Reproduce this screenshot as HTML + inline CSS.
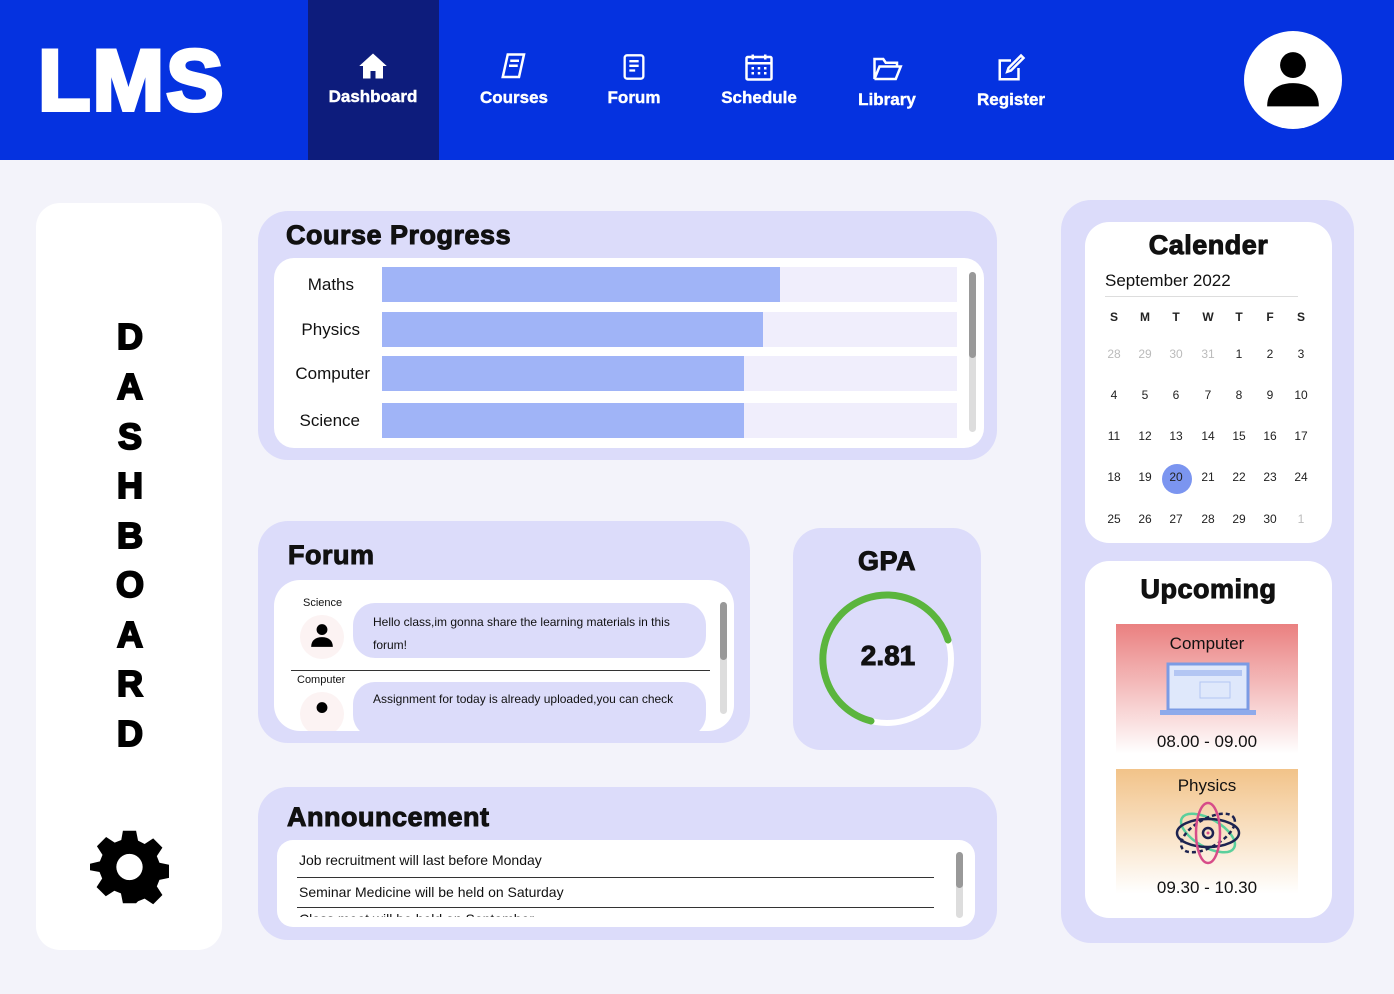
<!DOCTYPE html>
<html><head><meta charset="utf-8"><style>
*{margin:0;padding:0;box-sizing:border-box}
body{width:1394px;height:994px;background:#f3f3fa;font-family:"Liberation Sans",sans-serif;position:relative;overflow:hidden;color:#111}
.a{position:absolute}
.hd{left:0;top:0;width:1394px;height:160px;background:#0532e0}
.nav{color:#fff;font-weight:bold;font-size:17px;text-align:center;width:130px;-webkit-text-stroke:0.4px #fff}
.nav svg{display:block;margin:0 auto 6px}
.panel{background:#dcdcfa;border-radius:30px}
.white{background:#fff;border-radius:20px}
.h{font-weight:900;font-size:27px;letter-spacing:0.5px;-webkit-text-stroke:1px #111}
.lbl{font-size:17px;text-align:right;width:98px}
.track{left:382px;width:575px;height:35px;background:#f0eefc}
.fill{left:0;top:0;height:35px;background:#a0b4f7}
.cal{font-size:12px;width:30px;text-align:center;color:#222}
.g{color:#bbb}
.vl{font-weight:900;font-size:36px;left:114px;width:32px;text-align:center;-webkit-text-stroke:2px #000;color:#000}
</style></head><body>
<div class="a hd"></div>
<div class="a" style="left:38px;top:32px;color:#fff;font-weight:900;font-size:86px;letter-spacing:2px;-webkit-text-stroke:4px #fff">LMS</div>
<div class="a" style="left:308px;top:0;width:131px;height:160px;background:#0d1c7c"></div>
<div class="a nav" style="left:308px;top:51px"><svg width="30" height="30" viewBox="0 0 24 24"><path d="M12 2L1 12h3v10h6v-6h4v6h6V12h3z" fill="#fff"/></svg>Dashboard</div>
<div class="a nav" style="left:449px;top:52px"><svg width="30" height="30" viewBox="0 0 24 24" fill="none" stroke="#fff" stroke-width="2"><path d="M7 2h13l-4 18H3z"/><path d="M9 7h7M8 11h7"/></svg>Courses</div>
<div class="a nav" style="left:569px;top:52px"><svg width="28" height="30" viewBox="0 0 24 24" fill="none" stroke="#fff" stroke-width="2"><rect x="4" y="2" width="16" height="20" rx="2"/><path d="M8 7h8M8 11h8M8 15h5"/></svg>Forum</div>
<div class="a nav" style="left:694px;top:52px"><svg width="30" height="30" viewBox="0 0 24 24" fill="none" stroke="#fff" stroke-width="2"><rect x="2" y="4" width="20" height="18" rx="1"/><path d="M2 9h20M7 2v4M17 2v4M6 13h2M11 13h2M16 13h2M6 17h2M11 17h2M16 17h2"/></svg>Schedule</div>
<div class="a nav" style="left:822px;top:54px"><svg width="32" height="30" viewBox="0 0 24 24" fill="none" stroke="#fff" stroke-width="2"><path d="M2 4h7l2 3h9v3H6L2 20z M6 10h17l-4 10H2"/></svg>Library</div>
<div class="a nav" style="left:946px;top:52px"><svg width="30" height="32" viewBox="0 0 24 24" fill="none" stroke="#fff" stroke-width="2"><path d="M18 12v9H3V6h9"/><path d="M20 2l2 2-10 10-3 1 1-3z"/></svg>Register</div>
<div class="a" style="left:1244px;top:31px;width:98px;height:98px;border-radius:50%;background:#fff"></div>
<svg class="a" style="left:1262px;top:47px" width="62" height="62" viewBox="0 0 24 24"><circle cx="12" cy="7" r="5" fill="#000"/><path d="M2 23c0-6 4-9 10-9s10 3 10 9z" fill="#000"/></svg>

<div class="a white" style="left:36px;top:203px;width:186px;height:747px;border-radius:24px"></div>
<div class="a vl" style="top:316px">D</div><div class="a vl" style="top:366px">A</div><div class="a vl" style="top:416px">S</div><div class="a vl" style="top:465px">H</div><div class="a vl" style="top:515px">B</div><div class="a vl" style="top:564px">O</div><div class="a vl" style="top:614px">A</div><div class="a vl" style="top:663px">R</div><div class="a vl" style="top:713px">D</div>
<svg class="a" style="left:90px;top:827px" width="79" height="80" viewBox="0 0 24 24"><path fill="#000" fill-rule="evenodd" d="M10 1h4l.6 3 2 1 2.6-1.7 2.8 2.8L20.3 8.7l.8 2 2.9.6v4l-2.9.6-.8 2 1.7 2.6-2.8 2.8-2.6-1.7-2 .8L14 23h-4l-.6-3-2-.8-2.6 1.7-2.8-2.8 1.7-2.6-.8-2L0 13v-2l3-.7.8-2L2.1 5.7 4.9 2.9 7.5 4.6l2-.8zM12 8a4 4 0 100 8 4 4 0 000-8z"/></svg>

<div class="a panel" style="left:258px;top:211px;width:739px;height:249px"></div>
<div class="a h" style="left:286px;top:220px">Course Progress</div>
<div class="a white" style="left:274px;top:258px;width:710px;height:190px"></div>
<div class="a lbl" style="left:256px;top:275px">Maths</div>
<div class="a lbl" style="left:262px;top:320px">Physics</div>
<div class="a lbl" style="left:272px;top:364px">Computer</div>
<div class="a lbl" style="left:262px;top:411px">Science</div>
<div class="a track" style="top:267px"><div class="a fill" style="width:398px"></div></div>
<div class="a track" style="top:312px"><div class="a fill" style="width:381px"></div></div>
<div class="a track" style="top:356px"><div class="a fill" style="width:362px"></div></div>
<div class="a track" style="top:403px"><div class="a fill" style="width:362px"></div></div>
<div class="a" style="left:969px;top:272px;width:7px;height:160px;background:#ddd;border-radius:4px"></div>
<div class="a" style="left:969px;top:272px;width:7px;height:86px;background:#999;border-radius:4px"></div>

<div class="a panel" style="left:258px;top:521px;width:492px;height:222px"></div>
<div class="a h" style="left:288px;top:540px">Forum</div>
<div class="a white" style="left:274px;top:580px;width:460px;height:151px;border-radius:26px;overflow:hidden">
<div class="a" style="left:29px;top:17px;font-size:11px">Science</div>
<div class="a" style="left:26px;top:35px;width:44px;height:44px;border-radius:50%;background:#fcf3f3"></div>
<svg class="a" style="left:35px;top:40px" width="26" height="30" viewBox="0 0 24 24"><circle cx="12" cy="7" r="5"/><path d="M2 23c0-6 4-9 10-9s10 3 10 9z"/></svg>
<div class="a" style="left:79px;top:23px;width:353px;height:55px;border-radius:22px;background:#dcdcfa;font-size:12px;padding:8px 20px;line-height:23px">Hello class,im gonna share the learning materials in this forum!</div>
<div class="a" style="left:17px;top:90px;width:419px;height:1px;background:#333"></div>
<div class="a" style="left:23px;top:94px;font-size:11px">Computer</div>
<div class="a" style="left:26px;top:112px;width:44px;height:44px;border-radius:50%;background:#fcf3f3"></div>
<svg class="a" style="left:35px;top:118px" width="26" height="30" viewBox="0 0 24 24"><circle cx="12" cy="7" r="5"/></svg>
<div class="a" style="left:79px;top:102px;width:353px;height:55px;border-radius:22px;background:#dcdcfa;font-size:12px;padding:8px 20px;line-height:18px">Assignment for today is already uploaded,you can check</div>
<div class="a" style="left:446px;top:22px;width:7px;height:112px;background:#ddd;border-radius:4px"></div>
<div class="a" style="left:446px;top:22px;width:7px;height:58px;background:#999;border-radius:4px"></div>
</div>

<div class="a panel" style="left:793px;top:528px;width:188px;height:222px;border-radius:28px"></div>
<div class="a h" style="left:793px;top:546px;width:188px;text-align:center">GPA</div>
<svg class="a" style="left:818px;top:590px" width="140" height="136" viewBox="0 0 140 136"><circle cx="69" cy="69" r="64" fill="none" stroke="#fff" stroke-width="6"/><path d="M53 131 A64 64 0 1 1 130 50" fill="none" stroke="#5bb53d" stroke-width="7" stroke-linecap="round"/></svg>
<div class="a" style="left:793px;top:640px;width:190px;text-align:center;font-weight:900;font-size:28px;-webkit-text-stroke:1px #111">2.81</div>

<div class="a panel" style="left:258px;top:787px;width:739px;height:153px"></div>
<div class="a h" style="left:287px;top:802px">Announcement</div>
<div class="a white" style="left:277px;top:840px;width:698px;height:87px;border-radius:16px;overflow:hidden">
<div class="a" style="left:22px;top:12px;font-size:14px">Job recruitment will last before Monday</div>
<div class="a" style="left:20px;top:37px;width:637px;height:1px;background:#333"></div>
<div class="a" style="left:22px;top:44px;font-size:14px">Seminar Medicine will be held on Saturday</div>
<div class="a" style="left:20px;top:67px;width:637px;height:1px;background:#333"></div>
<div class="a" style="left:22px;top:71px;font-size:14px">Class meet will be held on September</div>
<div class="a" style="left:22px;top:77px;width:300px;height:12px;background:#fff"></div>
<div class="a" style="left:679px;top:12px;width:7px;height:66px;background:#ddd;border-radius:4px"></div>
<div class="a" style="left:679px;top:12px;width:7px;height:36px;background:#999;border-radius:4px"></div>
</div>

<div class="a panel" style="left:1061px;top:200px;width:293px;height:743px"></div>
<div class="a white" style="left:1085px;top:222px;width:247px;height:321px;border-radius:24px"></div>
<div class="a h" style="left:1085px;top:230px;width:247px;text-align:center">Calender</div>
<div class="a" style="left:1105px;top:271px;font-size:17px">September 2022</div>
<div class="a" style="left:1105px;top:296px;width:193px;height:1px;background:#ddd"></div>
<div class="a" style="left:1162px;top:464px;width:30px;height:30px;border-radius:50%;background:#7b95f0"></div>
<div id="cal"></div>
<script>
var xs=[1114,1145,1176,1208,1239,1270,1301],ys=[318,355,396,437,478,520];
var rows=[["S","M","T","W","T","F","S"],["28g","29g","30g","31g","1","2","3"],["4","5","6","7","8","9","10"],["11","12","13","14","15","16","17"],["18","19","20","21","22","23","24"],["25","26","27","28","29","30","1g"]];
var h="";rows.forEach(function(r,i){r.forEach(function(t,j){var g=t.slice(-1)=="g";t=t.replace("g","");h+='<div class="a cal'+(g?' g':'')+'" style="left:'+(xs[j]-15)+'px;top:'+(ys[i]-8)+'px;'+(i==0?'font-weight:bold':'')+'">'+t+'</div>';});});
document.getElementById("cal").outerHTML=h;
</script>
<div class="a white" style="left:1085px;top:561px;width:247px;height:357px;border-radius:24px"></div>
<div class="a h" style="left:1085px;top:574px;width:247px;text-align:center">Upcoming</div>
<div class="a" style="left:1116px;top:624px;width:182px;height:130px;background:linear-gradient(#ea8080,#fff)"></div>
<div class="a" style="left:1116px;top:634px;width:182px;text-align:center;font-size:17px">Computer</div>
<svg class="a" style="left:1160px;top:662px" width="96" height="54" viewBox="0 0 96 54"><rect x="8" y="2" width="80" height="46" fill="#dfe8fb" stroke="#7b9be4" stroke-width="3"/><rect x="14" y="8" width="68" height="6" fill="#b3c6f3"/><rect x="0" y="48" width="96" height="5" fill="#8eaaeb"/><rect x="40" y="20" width="30" height="16" fill="none" stroke="#b3c6f3"/></svg>
<div class="a" style="left:1116px;top:732px;width:182px;text-align:center;font-size:17px">08.00 - 09.00</div>
<div class="a" style="left:1116px;top:769px;width:182px;height:125px;background:linear-gradient(#f2c389,#fff)"></div>
<div class="a" style="left:1116px;top:776px;width:182px;text-align:center;font-size:17px">Physics</div>
<svg class="a" style="left:1175px;top:800px" width="66" height="66" viewBox="0 0 66 66" fill="none" stroke-width="2.5"><ellipse cx="33" cy="33" rx="30" ry="14" transform="rotate(30 33 33)" stroke="#5bcf9c"/><ellipse cx="33" cy="33" rx="30" ry="14" transform="rotate(-30 33 33)" stroke="#1d2350" stroke-dasharray="4 3"/><ellipse cx="33" cy="33" rx="31" ry="14" stroke="#1d2350"/><ellipse cx="33" cy="33" rx="12" ry="30" stroke="#d74c89"/><circle cx="33" cy="33" r="5" stroke="#1d2350"/><circle cx="33" cy="33" r="1.5" fill="#d74c89" stroke="none"/></svg>
<div class="a" style="left:1116px;top:878px;width:182px;text-align:center;font-size:17px">09.30 - 10.30</div>
</body></html>
